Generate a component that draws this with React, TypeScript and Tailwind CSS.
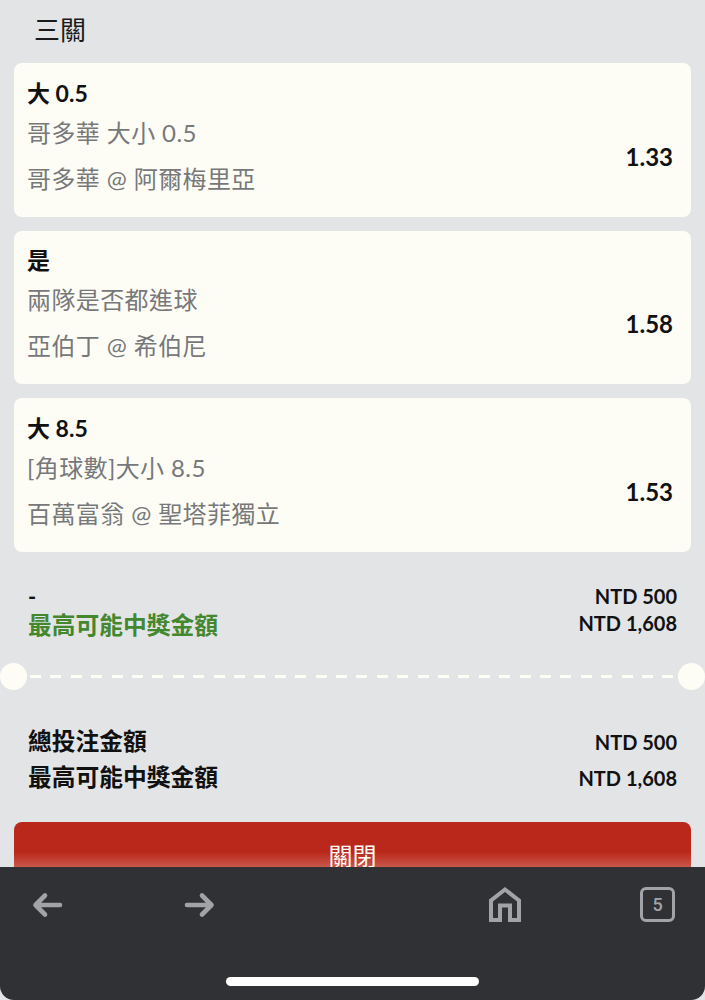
const bets = [
  { pick: "大 0.5", market: "哥多華 大小 0.5", teams: "哥多華 @ 阿爾梅里亞", odds: "1.33" },
  { pick: "是", market: "兩隊是否都進球", teams: "亞伯丁 @ 希伯尼", odds: "1.58" },
  { pick: "大 8.5", market: "[角球數]大小 8.5", teams: "百萬富翁 @ 聖塔菲獨立", odds: "1.53" },
];

function BetCard({ bet }: { bet: (typeof bets)[number] }) {
  return (
    <div className="flex h-[153.5px] items-center justify-between rounded-lg bg-[#fdfdf6] pr-[18px] pl-[13px]">
      <div className="-mt-[8px]">
        <div className="h-[34px] text-[23px] leading-[34px] font-bold text-[#111]">{bet.pick}</div>
        <div className="mt-[6px] h-[34px] text-[24px] leading-[34px] tracking-[0.4px] text-[#77787a]">{bet.market}</div>
        <div className="mt-[12px] h-[34px] text-[24px] leading-[34px] tracking-[0.4px] text-[#77787a]">{bet.teams}</div>
      </div>
      <div className="mt-[34px] text-[24px] leading-[30px] font-bold text-[#111]">{bet.odds}</div>
    </div>
  );
}

export default function App() {
  return (
    <div className="relative h-[1000px] w-[705px] overflow-hidden bg-[#e3e4e6] font-['Lato','Noto_Sans_CJK_TC',sans-serif]">
      <div className="px-[14px] pt-[11px]">
        <div className="h-[52px] pl-[20px] text-[26px] leading-[38px] text-[#1a1a1a]">三關</div>

        <div className="flex flex-col gap-[14px]">
          {bets.map((bet) => (
            <BetCard key={bet.market} bet={bet} />
          ))}
        </div>

        <div className="mt-[31px] flex justify-between px-[14px]">
          <div>
            <div className="h-[28px] text-[22px] leading-[28px] font-bold text-[#111]">-</div>
            <div className="-mt-[1px] h-[30px] text-[23.75px] leading-[30px] font-bold text-[#43872f]">最高可能中獎金額</div>
          </div>
          <div className="text-right text-[20px] leading-[27px] font-bold text-[#111]">
            <div>NTD 500</div>
            <div>NTD 1,608</div>
          </div>
        </div>
      </div>

      <div className="mt-[23px] flex h-[28px] items-center">
        <div className="h-[27px] w-[27px] shrink-0 rounded-full bg-[#fdfdf6]" />
        <div className="mx-[3px] h-[3px] flex-1 bg-[repeating-linear-gradient(90deg,#fdfdf6_0,#fdfdf6_11px,transparent_11px,transparent_20.4px)]" />
        <div className="h-[27px] w-[27px] shrink-0 rounded-full bg-[#fdfdf6]" />
      </div>

      <div className="mt-[36px] flex flex-col gap-[6px] px-[28px] font-bold text-[#111]">
        <div className="flex h-[30px] items-center justify-between">
          <span className="text-[23.75px]">總投注金額</span>
          <span className="text-[20px]">NTD 500</span>
        </div>
        <div className="flex h-[30px] items-center justify-between">
          <span className="text-[23.75px]">最高可能中獎金額</span>
          <span className="text-[20px]">NTD 1,608</span>
        </div>
      </div>

      <div className="mx-[14px] mt-[29px] flex h-[68px] items-center justify-center rounded-lg bg-[linear-gradient(#b9281b_0,#b9281b_30px,#c9574b_45px)] text-[24px] text-[#fdfdf6]">
        關閉
      </div>

      {/* browser toolbar over the page */}
      <div className="absolute bottom-0 left-0 h-[133px] w-full rounded-b-[14px] bg-[#303134]">
        <svg className="absolute top-[20px] left-[29px]" width="36" height="36" viewBox="0 0 36 36" fill="none">
          <path d="M31 18H7M16 8.5 6.5 18l9.5 9.5" stroke="#a1a3a7" strokeWidth="4.6" strokeLinecap="round" strokeLinejoin="round" />
        </svg>
        <svg className="absolute top-[20px] left-[182px]" width="36" height="36" viewBox="0 0 36 36" fill="none">
          <path d="M5 18h24M20 8.5l9.5 9.5-9.5 9.5" stroke="#a1a3a7" strokeWidth="4.6" strokeLinecap="round" strokeLinejoin="round" />
        </svg>
        <svg className="absolute top-[18px] left-[487px]" width="36" height="38" viewBox="0 0 36 38" fill="none">
          <path d="M4 35V15.5L18 4.5l14 11V35H23V20.5H13V35z" stroke="#a1a3a7" strokeWidth="4" />
        </svg>
        <div className="absolute top-[20px] left-[640px] flex h-[35px] w-[35px] items-center justify-center rounded-[6px] border-[3px] border-[#a1a3a7] font-['Roboto',sans-serif] text-[18px] font-medium text-[#a1a3a7]">
          5
        </div>
        <div className="absolute top-[110px] left-[226px] h-[9px] w-[253px] rounded-full bg-white" />
      </div>
    </div>
  );
}
